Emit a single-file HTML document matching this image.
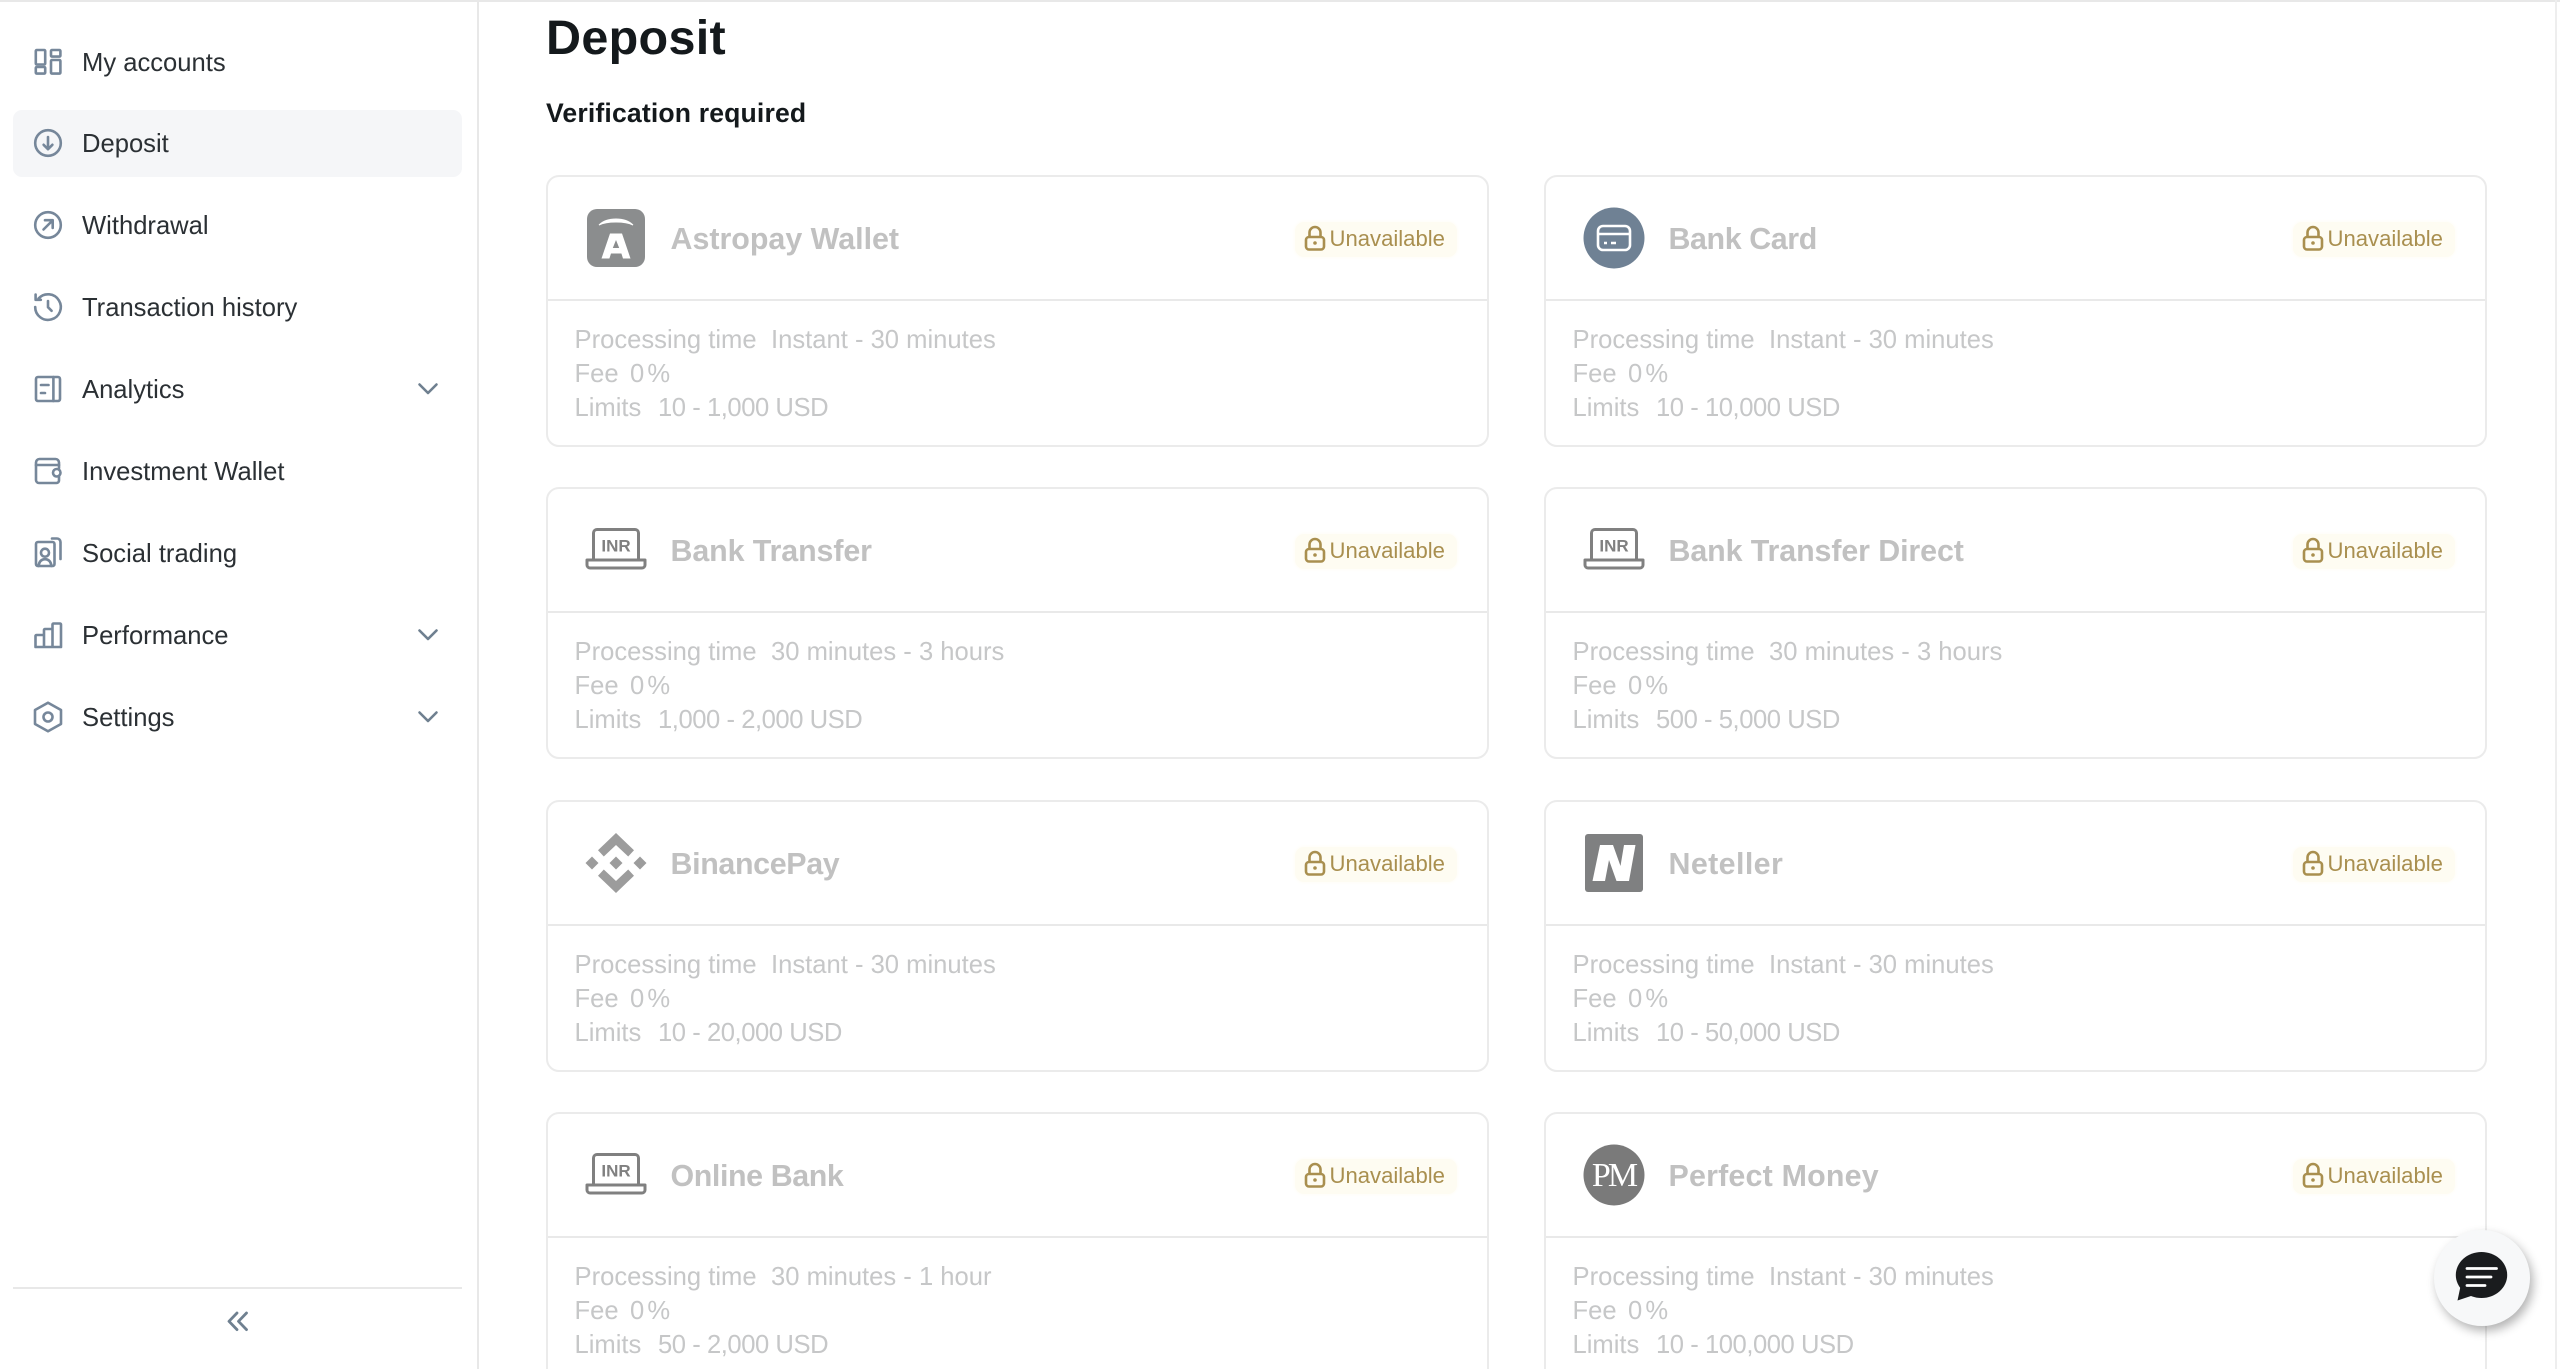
<!DOCTYPE html>
<html lang="en"><head><meta charset="utf-8"><title>Deposit</title>
<style>
html,body{margin:0;padding:0;width:2560px;height:1369px;overflow:hidden;background:#fff;font-family:"Liberation Sans",sans-serif}
#page{position:relative;width:2560px;height:1369px;overflow:hidden;background:#fff}
#top{position:absolute;left:0;top:0;width:2560px;height:2px;background:#e8e8e8}
#side{position:absolute;left:477px;top:0;width:2px;height:1369px;background:#e8e8e8}
#right{position:absolute;left:2555px;top:0;width:2px;height:1369px;background:#eeeeee}
.active{position:absolute;left:13px;top:110px;width:449px;height:67px;border-radius:9px;background:#f5f6f8}
.mi{position:absolute;left:82px;height:40px;line-height:40px;font-size:25.6px;color:#2b3034;white-space:nowrap}
.ic{position:absolute;left:28px;width:40px;height:40px}
.ic *{fill:none;stroke:#76879a;stroke-width:2.6;stroke-linejoin:round;stroke-linecap:round}
.chev{position:absolute;left:414px;width:28px;height:28px}
.chev path{fill:none;stroke:#6f8090;stroke-width:2.6;stroke-linecap:round;stroke-linejoin:round}
#sdiv{position:absolute;left:13px;top:1287px;width:449px;height:2px;background:#e8e8e8}
h1{position:absolute;left:546px;top:8px;margin:0;font-size:48.5px;line-height:60px;letter-spacing:.3px;font-weight:bold;color:#14191c}
h2{position:absolute;left:546px;top:92.5px;margin:0;font-size:26.6px;line-height:40px;letter-spacing:.15px;font-weight:bold;color:#14191c}
.card{position:absolute;width:943px;height:271.5px;box-sizing:border-box;border:2px solid #ebebeb;border-radius:13px;background:#fff}
.card .hr{position:absolute;left:0;right:0;top:122px;height:2px;background:#e9e9e9}
.logo{position:absolute;left:33px;top:26px;width:70px;height:70px}
.name{position:absolute;left:122.5px;top:42px;font-size:30.4px;line-height:40px;font-weight:bold;color:#c1c1c1;white-space:nowrap}
.bg{position:absolute;left:747px;top:44.5px;width:162px;height:35px;border-radius:9px;background:#fefcf2;box-shadow:0 0 4px #fefcf2}
.lock{position:absolute;left:755px;top:47px;width:24px;height:28px}
.un{position:absolute;left:781.5px;top:47px;font-size:22.1px;line-height:30px;color:#a98f4f;white-space:nowrap}
.body{position:absolute;left:26.5px;top:146px;font-size:25.6px;line-height:34px;color:#c6c7c8;white-space:nowrap}
.body div{height:34px}
.l{display:inline-block}
.l1{width:196.5px}.l2{width:55.5px}.l3{width:83.5px}
.pc{word-spacing:-4px}
.lim{letter-spacing:-.45px}
.fab{position:absolute;left:2434px;top:1230px;width:96px;height:96px;border-radius:50%;background:#f7f8f9;box-shadow:3px 5px 10px rgba(0,0,0,.3)}
.fab svg{position:absolute;left:0;top:0}
</style></head><body>
<div id="page">
<div id="top"></div><div id="side"></div><div id="right"></div>
<div class="active"></div>

<svg class="ic" style="top:42px" viewBox="0 0 40 40"><rect x="7.800" y="8" width="9.400" height="14.500" rx="1"/><rect x="23" y="8" width="9.400" height="6.600" rx="1"/><rect x="7.800" y="25" width="9.400" height="6.600" rx="1"/><rect x="23" y="18" width="9.400" height="13.600" rx="1"/></svg>
<div class="mi" style="top:42.500px">My accounts</div>

<svg class="ic" style="top:123px" viewBox="0 0 40 40"><circle cx="20" cy="20" r="12.800"/><path d="M20 14v12M15.600 21.800l4.400 4.400 4.400-4.400"/></svg>
<div class="mi" style="top:123.500px">Deposit</div>

<svg class="ic" style="top:205px" viewBox="0 0 40 40"><circle cx="20" cy="20" r="12.800"/><path d="M15.500 24.500l9-9M17 15.200h7.700v7.700"/></svg>
<div class="mi" style="top:205.500px">Withdrawal</div>

<svg class="ic" style="top:287px" viewBox="0 0 40 40"><path d="M10.600 11.400A12.800 12.800 0 1 1 7.200 20"/><path d="M7.600 7.600v5.200h5.200M20 14v6.200l3.600 3.600"/></svg>
<div class="mi" style="top:287.500px">Transaction history</div>

<svg class="ic" style="top:369px" viewBox="0 0 40 40"><rect x="8" y="8" width="24" height="24" rx="2"/><path d="M25.400 8v24M13 16h7.500M13 24h4"/></svg>
<div class="mi" style="top:369.500px">Analytics</div>
<svg class="chev" style="top:375px" viewBox="0 0 28 28"><path d="M5.500 9.500L14 18l8.500-8.500"/></svg>

<svg class="ic" style="top:451px" viewBox="0 0 40 40"><path d="M31 17v-5.500a3.500 3.500 0 0 0-3.500-3.500h-16A3.500 3.500 0 0 0 8 11.500V29a3 3 0 0 0 3 3h17.500a2.500 2.500 0 0 0 2.500-2.500V26"/><path d="M8 14h23"/><rect x="25" y="18" width="7.500" height="7.500" rx="3.700"/></svg>
<div class="mi" style="top:451.500px">Investment Wallet</div>

<svg class="ic" style="top:533px" viewBox="0 0 40 40"><rect x="8" y="9" width="18.500" height="24" rx="2"/><circle cx="17" cy="19.700" r="4"/><path d="M10.500 33c.8-5 3.200-6.800 6.500-6.800s5.700 1.800 6.500 6.800M24 5.500h5a3.500 3.500 0 0 1 3.500 3.500v17"/></svg>
<div class="mi" style="top:533.500px">Social trading</div>

<svg class="ic" style="top:615px" viewBox="0 0 40 40"><path d="M7.500 32V21a1 1 0 0 1 1-1H16V15a1 1 0 0 1 1-1h7.500V9.500a1 1 0 0 1 1-1h6.500a1 1 0 0 1 1 1V32zM16 20v12M24.500 14v18"/></svg>
<div class="mi" style="top:615.500px">Performance</div>
<svg class="chev" style="top:621px" viewBox="0 0 28 28"><path d="M5.500 9.500L14 18l8.500-8.500"/></svg>

<svg class="ic" style="top:697px" viewBox="0 0 40 40"><path d="M20 5.700l13 7.300v14l-13 7.300L7 27V13z"/><circle cx="20" cy="20" r="4.500"/></svg>
<div class="mi" style="top:697.500px">Settings</div>
<svg class="chev" style="top:703px" viewBox="0 0 28 28"><path d="M5.500 9.500L14 18l8.500-8.500"/></svg>

<div id="sdiv"></div>
<svg style="position:absolute;left:222px;top:1307px" width="32" height="28" viewBox="0 0 32 28"><path d="M15 6l-8 8.300 8 8.300M24.500 6l-8 8.300 8 8.300" fill="none" stroke="#6f8090" stroke-width="2.800" stroke-linecap="round" stroke-linejoin="round"/></svg>

<h1>Deposit</h1>
<h2>Verification required</h2>

<!-- 1 -->
<div class="card" style="left:546px;top:175px"><div class="hr"></div>
<svg class="logo" viewBox="0 0 70 70"><rect x="6" y="6" width="58" height="58" rx="10" fill="#8b8d8e"/><path d="M18 22C26 14 44 14 52 22C44 18 26 18 18 22z" fill="#fff" stroke="#fff" stroke-width="1"/><path d="M29 30.500h12l8.500 25h-7.500l-1.600-5H30l-1.600 5H20.500zM35 37l-3.200 8h6.400z" fill="#fff" fill-rule="evenodd"/></svg>
<div class="name">Astropay Wallet</div>
<div class="bg"></div><svg class="lock" viewBox="0 0 24 28"><rect x="3" y="13" width="18" height="12.500" rx="3" fill="none" stroke="#a98f4f" stroke-width="2.600"/><path d="M6.500 13V8.500a5.500 5.500 0 0 1 11 0V13" fill="none" stroke="#a98f4f" stroke-width="2.600"/><circle cx="12" cy="19" r="1.800" fill="#a98f4f"/></svg><div class="un">Unavailable</div>
<div class="body"><div><span class="l l1">Processing time</span>Instant - 30 minutes</div><div><span class="l l2">Fee</span><span class="pc">0 %</span></div><div><span class="l l3">Limits</span><span class="lim">10 - 1,000 USD</span></div></div>
</div>

<!-- 2 -->
<div class="card" style="left:1544px;top:175px"><div class="hr"></div>
<svg class="logo" viewBox="0 0 70 70"><circle cx="35" cy="35" r="30.500" fill="#6f8194"/><rect x="19" y="23" width="32" height="24" rx="5" fill="none" stroke="#fff" stroke-width="2.600"/><path d="M19 31h32" stroke="#fff" stroke-width="2.600"/><path d="M25 40h3M32 40h5" stroke="#fff" stroke-width="2.600"/></svg>
<div class="name" style="letter-spacing:-.4px">Bank Card</div>
<div class="bg"></div><svg class="lock" viewBox="0 0 24 28"><rect x="3" y="13" width="18" height="12.500" rx="3" fill="none" stroke="#a98f4f" stroke-width="2.600"/><path d="M6.500 13V8.500a5.500 5.500 0 0 1 11 0V13" fill="none" stroke="#a98f4f" stroke-width="2.600"/><circle cx="12" cy="19" r="1.800" fill="#a98f4f"/></svg><div class="un">Unavailable</div>
<div class="body"><div><span class="l l1">Processing time</span>Instant - 30 minutes</div><div><span class="l l2">Fee</span><span class="pc">0 %</span></div><div><span class="l l3">Limits</span><span class="lim">10 - 10,000 USD</span></div></div>
</div>

<!-- 3 -->
<div class="card" style="left:546px;top:487px"><div class="hr"></div>
<svg class="logo" viewBox="0 0 70 70"><path d="M12.500 44V18a3.500 3.500 0 0 1 3.500-3.500h38a3.500 3.500 0 0 1 3.500 3.500v26" fill="none" stroke="#808080" stroke-width="3"/><path d="M6 45h58v5a3 3 0 0 1-3 3H9a3 3 0 0 1-3-3z" fill="none" stroke="#808080" stroke-width="3" stroke-linejoin="round"/><text x="35" y="36.500" text-anchor="middle" font-family="Liberation Sans" font-weight="bold" font-size="17" fill="#808080">INR</text></svg>
<div class="name" style="letter-spacing:-.1px">Bank Transfer</div>
<div class="bg"></div><svg class="lock" viewBox="0 0 24 28"><rect x="3" y="13" width="18" height="12.500" rx="3" fill="none" stroke="#a98f4f" stroke-width="2.600"/><path d="M6.500 13V8.500a5.500 5.500 0 0 1 11 0V13" fill="none" stroke="#a98f4f" stroke-width="2.600"/><circle cx="12" cy="19" r="1.800" fill="#a98f4f"/></svg><div class="un">Unavailable</div>
<div class="body"><div><span class="l l1">Processing time</span>30 minutes - 3 hours</div><div><span class="l l2">Fee</span><span class="pc">0 %</span></div><div><span class="l l3">Limits</span><span class="lim">1,000 - 2,000 USD</span></div></div>
</div>

<!-- 4 -->
<div class="card" style="left:1544px;top:487px"><div class="hr"></div>
<svg class="logo" viewBox="0 0 70 70"><path d="M12.500 44V18a3.500 3.500 0 0 1 3.500-3.500h38a3.500 3.500 0 0 1 3.500 3.500v26" fill="none" stroke="#808080" stroke-width="3"/><path d="M6 45h58v5a3 3 0 0 1-3 3H9a3 3 0 0 1-3-3z" fill="none" stroke="#808080" stroke-width="3" stroke-linejoin="round"/><text x="35" y="36.500" text-anchor="middle" font-family="Liberation Sans" font-weight="bold" font-size="17" fill="#808080">INR</text></svg>
<div class="name" style="letter-spacing:-.1px">Bank Transfer Direct</div>
<div class="bg"></div><svg class="lock" viewBox="0 0 24 28"><rect x="3" y="13" width="18" height="12.500" rx="3" fill="none" stroke="#a98f4f" stroke-width="2.600"/><path d="M6.500 13V8.500a5.500 5.500 0 0 1 11 0V13" fill="none" stroke="#a98f4f" stroke-width="2.600"/><circle cx="12" cy="19" r="1.800" fill="#a98f4f"/></svg><div class="un">Unavailable</div>
<div class="body"><div><span class="l l1">Processing time</span>30 minutes - 3 hours</div><div><span class="l l2">Fee</span><span class="pc">0 %</span></div><div><span class="l l3">Limits</span><span class="lim">500 - 5,000 USD</span></div></div>
</div>

<!-- 5 -->
<div class="card" style="left:546px;top:800px"><div class="hr"></div>
<svg class="logo" viewBox="0 0 70 70"><path fill="#9c9c9c" d="M35 5L53 22.300 47.200 28.500 35 17 22.800 28.500 17 22.300zM35 65L53 47.700 47.200 41.500 35 53 22.800 41.500 17 47.700zM35 28.500l6.500 6.500-6.500 6.500-6.500-6.500zM11 28.500l6.500 6.500-6.500 6.500L4.500 35zM59 28.500l6.500 6.500-6.500 6.500L52.500 35z"/></svg>
<div class="name" style="letter-spacing:-.35px">BinancePay</div>
<div class="bg"></div><svg class="lock" viewBox="0 0 24 28"><rect x="3" y="13" width="18" height="12.500" rx="3" fill="none" stroke="#a98f4f" stroke-width="2.600"/><path d="M6.500 13V8.500a5.500 5.500 0 0 1 11 0V13" fill="none" stroke="#a98f4f" stroke-width="2.600"/><circle cx="12" cy="19" r="1.800" fill="#a98f4f"/></svg><div class="un">Unavailable</div>
<div class="body"><div><span class="l l1">Processing time</span>Instant - 30 minutes</div><div><span class="l l2">Fee</span><span class="pc">0 %</span></div><div><span class="l l3">Limits</span><span class="lim">10 - 20,000 USD</span></div></div>
</div>

<!-- 6 -->
<div class="card" style="left:1544px;top:800px"><div class="hr"></div>
<svg class="logo" viewBox="0 0 70 70"><rect x="6" y="6" width="58" height="58" rx="3" fill="#7f8081"/><path fill="#fff" d="M21 17h13l7.500 21L45 17h11.500L50 53H37.500L30 32l-4 21H13.500z"/></svg>
<div class="name" style="letter-spacing:.4px">Neteller</div>
<div class="bg"></div><svg class="lock" viewBox="0 0 24 28"><rect x="3" y="13" width="18" height="12.500" rx="3" fill="none" stroke="#a98f4f" stroke-width="2.600"/><path d="M6.500 13V8.500a5.500 5.500 0 0 1 11 0V13" fill="none" stroke="#a98f4f" stroke-width="2.600"/><circle cx="12" cy="19" r="1.800" fill="#a98f4f"/></svg><div class="un">Unavailable</div>
<div class="body"><div><span class="l l1">Processing time</span>Instant - 30 minutes</div><div><span class="l l2">Fee</span><span class="pc">0 %</span></div><div><span class="l l3">Limits</span><span class="lim">10 - 50,000 USD</span></div></div>
</div>

<!-- 7 -->
<div class="card" style="left:546px;top:1112px"><div class="hr"></div>
<svg class="logo" viewBox="0 0 70 70"><path d="M12.500 44V18a3.500 3.500 0 0 1 3.500-3.500h38a3.500 3.500 0 0 1 3.500 3.500v26" fill="none" stroke="#808080" stroke-width="3"/><path d="M6 45h58v5a3 3 0 0 1-3 3H9a3 3 0 0 1-3-3z" fill="none" stroke="#808080" stroke-width="3" stroke-linejoin="round"/><text x="35" y="36.500" text-anchor="middle" font-family="Liberation Sans" font-weight="bold" font-size="17" fill="#808080">INR</text></svg>
<div class="name" style="letter-spacing:-.4px">Online Bank</div>
<div class="bg"></div><svg class="lock" viewBox="0 0 24 28"><rect x="3" y="13" width="18" height="12.500" rx="3" fill="none" stroke="#a98f4f" stroke-width="2.600"/><path d="M6.500 13V8.500a5.500 5.500 0 0 1 11 0V13" fill="none" stroke="#a98f4f" stroke-width="2.600"/><circle cx="12" cy="19" r="1.800" fill="#a98f4f"/></svg><div class="un">Unavailable</div>
<div class="body"><div><span class="l l1">Processing time</span>30 minutes - 1 hour</div><div><span class="l l2">Fee</span><span class="pc">0 %</span></div><div><span class="l l3">Limits</span><span class="lim">50 - 2,000 USD</span></div></div>
</div>

<!-- 8 -->
<div class="card" style="left:1544px;top:1112px"><div class="hr"></div>
<svg class="logo" viewBox="0 0 70 70"><circle cx="35" cy="35" r="30.500" fill="#7a7a7a"/><text x="34.500" y="46" text-anchor="middle" font-family="Liberation Serif" font-size="34" letter-spacing="-3" fill="#fff">PM</text></svg>
<div class="name" style="letter-spacing:.2px">Perfect Money</div>
<div class="bg"></div><svg class="lock" viewBox="0 0 24 28"><rect x="3" y="13" width="18" height="12.500" rx="3" fill="none" stroke="#a98f4f" stroke-width="2.600"/><path d="M6.500 13V8.500a5.500 5.500 0 0 1 11 0V13" fill="none" stroke="#a98f4f" stroke-width="2.600"/><circle cx="12" cy="19" r="1.800" fill="#a98f4f"/></svg><div class="un">Unavailable</div>
<div class="body"><div><span class="l l1">Processing time</span>Instant - 30 minutes</div><div><span class="l l2">Fee</span><span class="pc">0 %</span></div><div><span class="l l3">Limits</span><span class="lim">10 - 100,000 USD</span></div></div>
</div>

<div class="fab"><svg width="96" height="96" viewBox="0 0 96 96"><ellipse cx="47.500" cy="45" rx="25.700" ry="23" fill="#1a1c1e"/><path d="M27 54L23.500 70.500 40 65z" fill="#1a1c1e"/><path d="M33 38.500h29.500M33 47h24M33 55.500h18" stroke="#fff" stroke-width="2.800" stroke-linecap="round" fill="none"/></svg></div>
</div>
</body></html>
